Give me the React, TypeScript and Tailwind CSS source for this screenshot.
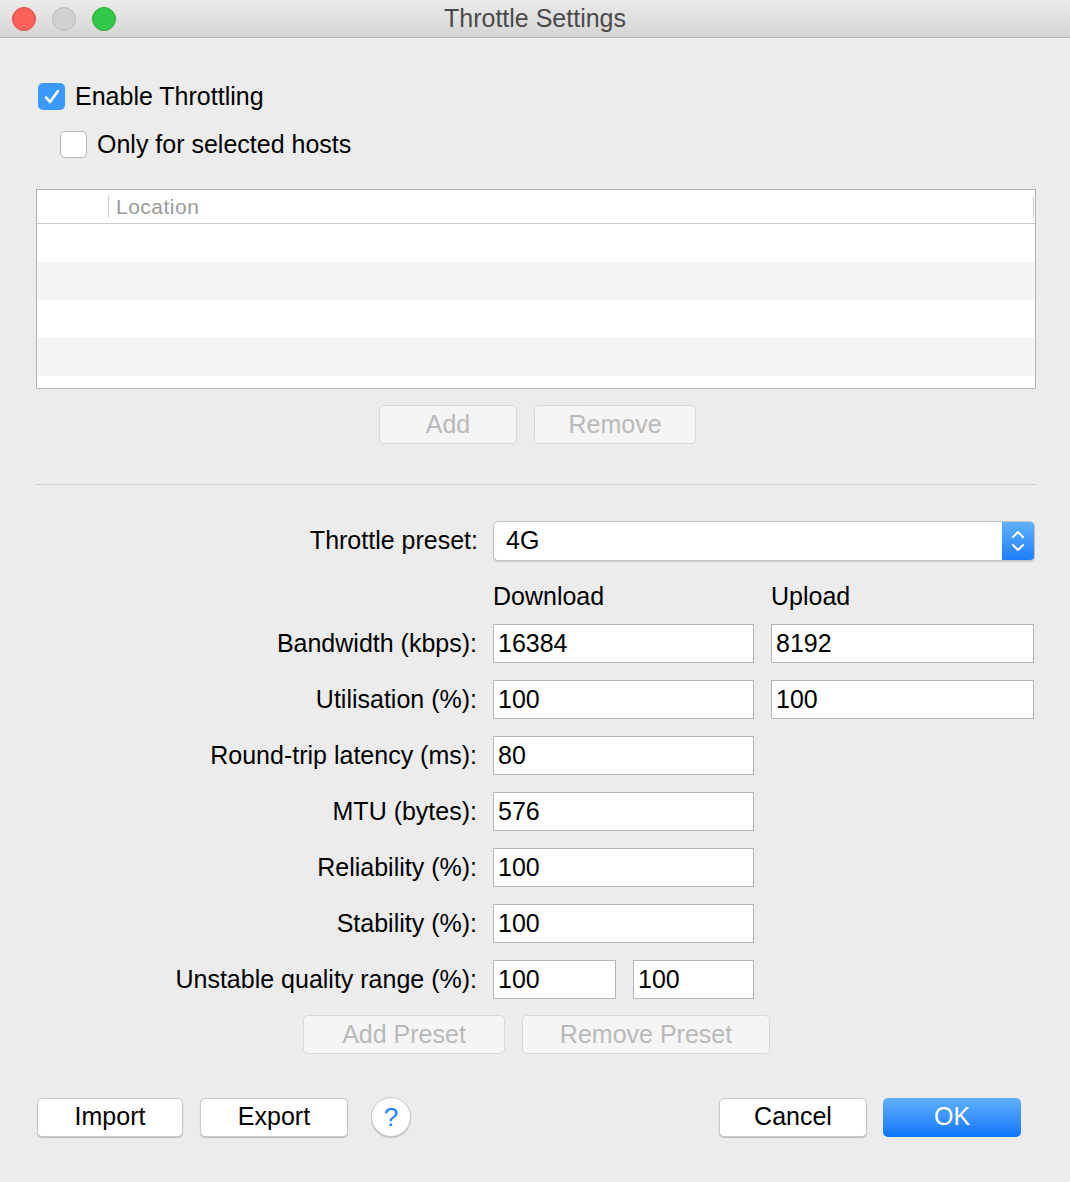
import React from "react";

const F = { fontFamily: '"Liberation Sans", Arial, sans-serif' };

function Field({ v, w }: { v: string; w: string }) {
  return (
    <div className={`${w} h-[39px] bg-white border border-[#b5b5b5] flex items-center pl-[4px] text-[25px] text-black`}>{v}</div>
  );
}

function Row({ label, children }: { label: string; children?: React.ReactNode }) {
  return (
    <div className="flex items-center h-[39px] mb-[17px]">
      <div className="w-[478px] text-right pr-[1px] text-[25px] text-black">{label}</div>
      <div className="ml-[15px] flex gap-[17px]">{children}</div>
    </div>
  );
}

function Btn({ t, w, disabled, cls = "" }: { t: string; w: string; disabled?: boolean; cls?: string }) {
  return (
    <div
      className={`${w} h-[39px] rounded-[5px] flex items-center justify-center text-[25px] ${
        disabled
          ? "bg-[#f5f5f5] text-[#b9b9b9] border border-[#d8d8d8]"
          : "bg-white text-black border border-[#c8c8c8] shadow-[0_1px_1px_rgba(0,0,0,0.2)]"
      } ${cls}`}
    >
      {t}
    </div>
  );
}

export default function App() {
  return (
    <div style={F} className="w-[1070px] h-[1182px] bg-[#ececec] overflow-hidden relative">
      <div className="h-[38px] bg-gradient-to-b from-[#ebebeb] to-[#d5d5d5] border-b border-[#b8b8b8] flex items-center relative">
        <div className="flex gap-[16px] ml-[12px]">
          <div className="w-[24px] h-[24px] rounded-full bg-[#fc605b] border border-[#de4a44]" />
          <div className="w-[24px] h-[24px] rounded-full bg-[#d0d0d0] border border-[#bcbcbc]" />
          <div className="w-[24px] h-[24px] rounded-full bg-[#34c84a] border border-[#2aa83a]" />
        </div>
        <div className="absolute inset-0 flex items-center justify-center text-[25px] text-[#4a4a4a]">Throttle Settings</div>
      </div>

      <div className="flex items-center mt-[45px] ml-[38px] h-[27px]">
        <div className="w-[27px] h-[27px] rounded-[5px] bg-[#3b99fc] flex items-center justify-center">
          <svg width="18" height="18" viewBox="0 0 18 18"><path d="M3 9.5l4 4.5 8-11" stroke="white" strokeWidth="2.6" fill="none" strokeLinecap="round" strokeLinejoin="round" /></svg>
        </div>
        <span className="ml-[10px] text-[25px] text-black">Enable Throttling</span>
      </div>
      <div className="flex items-center mt-[21px] ml-[60px] h-[27px]">
        <div className="w-[27px] h-[27px] rounded-[5px] bg-white border border-[#b5b5b5]" />
        <span className="ml-[10px] text-[25px] text-black">Only for selected hosts</span>
      </div>

      <div className="mt-[31px] ml-[36px] w-[1000px] h-[200px] border border-[#b2b2b2] bg-white flex flex-col">
        <div className="h-[34px] border-b border-[#c8c8c8] flex items-center">
          <div className="w-[72px] h-[22px] border-r border-[#d0d0d0]" />
          <span className="ml-[7px] text-[21px] text-[#9a9a9a] tracking-[0.5px]">Location</span>
          <div className="flex-1" />
          <div className="w-px h-[22px] bg-[#d0d0d0] mr-[1px]" />
        </div>
        <div className="h-[38px] bg-white" />
        <div className="h-[38px] bg-[#f4f4f4]" />
        <div className="h-[38px] bg-white" />
        <div className="h-[38px] bg-[#f4f4f4]" />
      </div>

      <div className="flex gap-[17px] mt-[16px] ml-[379px]">
        <Btn t="Add" w="w-[138px]" disabled />
        <Btn t="Remove" w="w-[162px]" disabled />
      </div>

      <div className="mt-[40px] ml-[36px] w-[1000px] h-px bg-[#cfcfcf]" />

      <div className="mt-[36px]">
        <div className="flex items-center h-[40px] mb-[16px]">
          <div className="w-[478px] text-right text-[25px]">Throttle preset:</div>
          <div className="ml-[15px] w-[542px] h-[40px] bg-white rounded-[5px] border border-[#c2c2c2] shadow-[0_1px_1px_rgba(0,0,0,0.15)] flex items-center overflow-hidden">
            <span className="flex-1 pl-[12px] text-[25px]">4G</span>
            <div className="w-[32px] h-full bg-gradient-to-b from-[#5fb0fd] to-[#1a7ef9] flex items-center justify-center">
              <svg width="16" height="26" viewBox="0 0 16 26"><path d="M3 9l5-5 5 5M3 17l5 5 5-5" stroke="white" strokeWidth="2" fill="none" strokeLinecap="round" strokeLinejoin="round" /></svg>
            </div>
          </div>
        </div>
        <div className="flex h-[40px] mb-[7px] items-center text-[25px]">
          <div className="ml-[493px] w-[278px]">Download</div>
          <div>Upload</div>
        </div>
        <Row label="Bandwidth (kbps):"><Field v="16384" w="w-[261px]" /><Field v="8192" w="w-[263px]" /></Row>
        <Row label="Utilisation (%):"><Field v="100" w="w-[261px]" /><Field v="100" w="w-[263px]" /></Row>
        <Row label="Round-trip latency (ms):"><Field v="80" w="w-[261px]" /></Row>
        <Row label="MTU (bytes):"><Field v="576" w="w-[261px]" /></Row>
        <Row label="Reliability (%):"><Field v="100" w="w-[261px]" /></Row>
        <Row label="Stability (%):"><Field v="100" w="w-[261px]" /></Row>
        <Row label="Unstable quality range (%):"><Field v="100" w="w-[123px]" /><Field v="100" w="w-[121px]" /></Row>
      </div>

      <div className="flex gap-[17px] ml-[303px] mt-[-1px]">
        <Btn t="Add Preset" w="w-[202px]" disabled />
        <Btn t="Remove Preset" w="w-[248px]" disabled />
      </div>

      <div className="flex items-center mt-[43px] ml-[37px] w-[984px]">
        <Btn t="Import" w="w-[146px]" />
        <Btn t="Export" w="w-[148px]" cls="ml-[17px]" />
        <div className="ml-[23px] w-[40px] h-[40px] rounded-full bg-white border border-[#c8c8c8] shadow-[0_1px_1px_rgba(0,0,0,0.2)] flex items-center justify-center text-[26px] text-[#1a7ef9]">?</div>
        <div className="flex-1" />
        <Btn t="Cancel" w="w-[148px]" />
        <div className="ml-[16px] w-[138px] h-[39px] rounded-[5px] bg-gradient-to-b from-[#5fb0fd] to-[#0a74fb] text-white flex items-center justify-center text-[25px]">OK</div>
      </div>
    </div>
  );
}
